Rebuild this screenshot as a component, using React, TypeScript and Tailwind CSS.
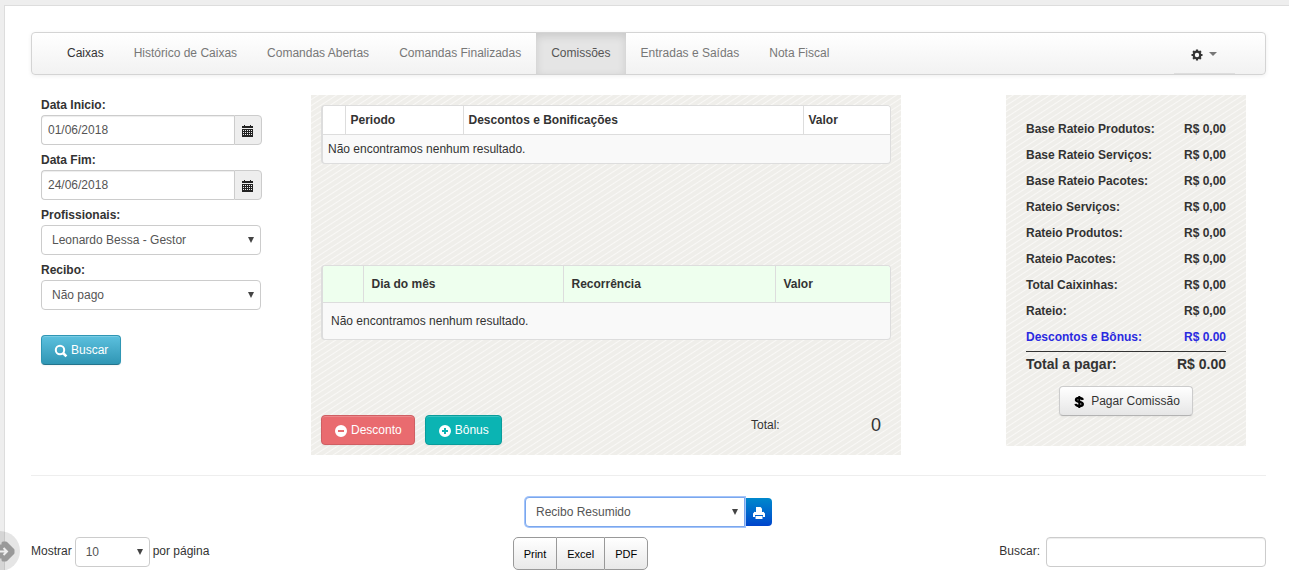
import type { ReactNode } from "react";

const iconClass = "h-3.5 w-3.5 shrink-0 translate-y-px";

function CalendarIcon() {
  return (
    <svg viewBox="0 0 12 14" className="h-3.5 w-3 translate-y-0.5 text-[#222]" fill="currentColor" shapeRendering="crispEdges" aria-hidden="true">
      <path d="M2 0h1v1h5V0h1v1h2v2H0V1h2z" />
      <path
        fillRule="evenodd"
        d="M0 4h11v8H0zM1 5v1h1V5zM3 5v1h1V5zM5 5v1h1V5zM7 5v1h1V5zM9 5v1h1V5zM1 7v1h1V7zM3 7v1h1V7zM5 7v1h1V7zM7 7v1h1V7zM9 7v1h1V7zM1 9v1h1V9zM3 9v1h1V9zM5 9v1h1V9zM7 9v1h1V9zM9 9v1h1V9z"
      />
    </svg>
  );
}

function SearchIcon() {
  return (
    <svg viewBox="0 0 14 14" className={iconClass} fill="none" stroke="currentColor" aria-hidden="true">
      <circle cx="6" cy="6" r="4.2" strokeWidth="2" />
      <path d="M9 9l3.4 3.4" strokeWidth="2.6" />
    </svg>
  );
}

function CircleIcon({ plus = false }: { plus?: boolean }) {
  return (
    <svg viewBox="0 0 14 14" className={iconClass} fill="currentColor" aria-hidden="true">
      <path
        fillRule="evenodd"
        d={
          plus
            ? "M7 1a6 6 0 1 0 0 12A6 6 0 0 0 7 1zM6 4h2v2h2v2H8v2H6V8H4V6h2z"
            : "M7 1a6 6 0 1 0 0 12A6 6 0 0 0 7 1zM4 6h6v2H4z"
        }
      />
    </svg>
  );
}

function DollarIcon() {
  return (
    <svg viewBox="0 0 14 14" className={`${iconClass} text-black`} fill="none" stroke="currentColor" aria-hidden="true">
      <path d="M10.8 4.9C10.4 3.6 9.200 3 7.300 3S4 3.700 4 4.900C4 7.400 10.800 6.200 10.800 9c0 1.300-1.300 2-3.500 2s-3.500-.7-3.700-2.100" strokeWidth="2.400" />
      <path d="M7.300 1v12" strokeWidth="2" />
    </svg>
  );
}

function PrinterIcon() {
  return (
    <svg viewBox="0 0 14 14" className={iconClass} fill="currentColor" aria-hidden="true">
      <path d="M4 1h4.500L10 2.500V6H4z" />
      <path d="M1 7.500L3 5.500V7h8V5.500l2 2V11h-2V9H3v2H1z" />
      <path d="M3.500 10h7v3h-7z" />
      <path d="M2 6h10v3H2z" />
    </svg>
  );
}

function CogIcon() {
  const teeth = [0, 45, 90, 135];
  return (
    <svg viewBox="0 0 14 14" className="h-3.5 w-3.5 text-[#333]" fill="none" stroke="currentColor" aria-hidden="true">
      <circle cx="7" cy="7" r="3.300" strokeWidth="2.200" />
      {teeth.map((a) => (
        <path key={a} d="M7 1.500v2M7 10.500v2" strokeWidth="2.200" transform={`rotate(${a} 7 7)`} />
      ))}
    </svg>
  );
}

function Select({ id, label, options, className = "", focused = false }: { id: string; label?: string; options: string[]; className?: string; focused?: boolean }) {
  return (
    <div className={`relative ${className}`}>
      <select
        id={id}
        aria-label={label}
        className={`h-[30px] w-full appearance-none border bg-white pr-5 pl-2.5 text-[#555] outline-none ${
          focused ? "rounded-l border-[#7ba7ec] ring-1 ring-[#a3c4fb]" : "rounded border-[#ccc]"
        }`}
      >
        {options.map((o) => (
          <option key={o}>{o}</option>
        ))}
      </select>
      <svg viewBox="0 0 6 6" className="pointer-events-none absolute top-3 right-[7px] h-1.5 w-1.5" fill="#444" aria-hidden="true">
        <path d="M0 0h6L3 6z" />
      </svg>
    </div>
  );
}

function DateField({ id, label, value }: { id: string; label: string; value: string }) {
  return (
    <div className="mb-[5px]">
      <label htmlFor={id} className="block font-bold">{label}</label>
      <div className="flex h-[30px]">
        <input
          id={id}
          defaultValue={value}
          className="w-[193px] rounded-l border border-r-0 border-[#ccc] bg-white px-1.5 text-[#555] shadow-[inset_0_1px_1px_rgba(0,0,0,0.075)] outline-none"
        />
        <button type="button" aria-label={`Abrir calendário: ${label}`} className="flex w-7 items-center justify-center rounded-r border border-[#ccc] bg-[#eee]">
          <CalendarIcon />
        </button>
      </div>
    </div>
  );
}

function SelectField({ id, label, options }: { id: string; label: string; options: string[] }) {
  return (
    <div className="mb-[5px]">
      <label htmlFor={id} className="block font-bold">{label}</label>
      <Select id={id} options={options} className="w-[220px]" />
    </div>
  );
}

function Button({ className, children }: { className: string; children: ReactNode }) {
  return (
    <button
      type="button"
      className={`inline-flex h-[30px] items-center gap-[3px] rounded border px-3 whitespace-nowrap shadow-[inset_0_1px_0_rgba(255,255,255,0.2),0_1px_2px_rgba(0,0,0,0.05)] ${className}`}
    >
      {children}
    </button>
  );
}

const stripes =
  "bg-[#efeeea] bg-[repeating-linear-gradient(147deg,transparent_0px,transparent_3px,#f9f8f6_4px,transparent_5px)]";

const tabs = ["Caixas", "Histórico de Caixas", "Comandas Abertas", "Comandas Finalizadas", "Comissões", "Entradas e Saídas", "Nota Fiscal"];

const summary = [
  ["Base Rateio Produtos:", "R$ 0,00"],
  ["Base Rateio Serviços:", "R$ 0,00"],
  ["Base Rateio Pacotes:", "R$ 0,00"],
  ["Rateio Serviços:", "R$ 0,00"],
  ["Rateio Produtos:", "R$ 0,00"],
  ["Rateio Pacotes:", "R$ 0,00"],
  ["Total Caixinhas:", "R$ 0,00"],
  ["Rateio:", "R$ 0,00"],
  ["Descontos e Bônus:", "R$ 0.00"],
];

function Navbar() {
  return (
    <nav className="flex h-[43px] justify-between rounded border border-[#d4d4d4] bg-linear-to-b from-white to-[#f2f2f2] px-5 shadow-[0_1px_4px_rgba(0,0,0,0.067)]">
      <div className="flex">
        {tabs.map((t) => (
          <a
            key={t}
            href="#"
            className={`flex items-center px-[15px] pb-0.5 whitespace-nowrap ${
              t === "Comissões"
                ? "bg-[#e5e5e5] text-[#555] shadow-[inset_0_3px_8px_rgba(0,0,0,0.125)]"
                : t === "Caixas"
                  ? "text-[#333]"
                  : "text-[#777]"
            }`}
          >
            {t}
          </a>
        ))}
      </div>
      <button type="button" aria-label="Configurações" className="mr-2.5 flex w-[61px] items-center gap-[5px] border-b border-[#ddd] pt-1 pl-4">
        <CogIcon />
        <svg viewBox="0 0 8 4" className="mb-0.5 h-1 w-2" fill="#777" aria-hidden="true">
          <path d="M0 0h8L4 4z" />
        </svg>
      </button>
    </nav>
  );
}

function Filters() {
  return (
    <form className="w-[280px] shrink-0 pl-2.5">
      <DateField id="inicio" label="Data Inicio:" value="01/06/2018" />
      <DateField id="fim" label="Data Fim:" value="24/06/2018" />
      <SelectField id="profissionais" label="Profissionais:" options={["Leonardo Bessa - Gestor"]} />
      <SelectField id="recibo" label="Recibo:" options={["Não pago", "Pago"]} />
      <div className="pt-5">
        <Button className="border-[#2f96b4] border-b-[#24748c] bg-linear-to-b from-[#5bc0de] to-[#2f96b4] text-white">
          <SearchIcon />
          Buscar
        </Button>
      </div>
    </form>
  );
}

function Tables() {
  const frame = "overflow-hidden rounded border border-l-2 border-[#ddd] bg-[#f9f9f9]";
  return (
    <section className={`h-[360px] max-w-[590px] flex-1 p-2.5 ${stripes}`}>
      <div className="h-40">
        <div className={frame}>
          <table className="w-full table-fixed text-left">
            <thead className="bg-white">
              <tr className="h-[28px]">
                <th className="w-[22px]" />
                <th className="w-[118px] border-l border-[#ddd] px-[5px]">Periodo</th>
                <th className="border-l border-[#ddd] px-[5px]">Descontos e Bonificações</th>
                <th className="w-[87px] border-l border-[#ddd] px-[5px]">Valor</th>
              </tr>
            </thead>
            <tbody>
              <tr className="h-[29px]">
                <td colSpan={4} className="border-t border-[#ddd] px-[5px]">Não encontramos nenhum resultado.</td>
              </tr>
            </tbody>
          </table>
        </div>
      </div>
      <div className="h-[150px]">
        <div className={frame}>
          <table className="w-full table-fixed text-left">
            <thead className="bg-[#eeffee]">
              <tr className="h-9">
                <th className="w-10" />
                <th className="w-[200px] border-l border-[#ddd] px-2">Dia do mês</th>
                <th className="border-l border-[#ddd] px-2">Recorrência</th>
                <th className="w-[115px] border-l border-[#ddd] px-2">Valor</th>
              </tr>
            </thead>
            <tbody>
              <tr className="h-[37px]">
                <td colSpan={4} className="border-t border-[#ddd] px-2">Não encontramos nenhum resultado.</td>
              </tr>
            </tbody>
          </table>
        </div>
      </div>
      <div className="flex gap-2.5">
        <Button className="border-[#cf5f63] bg-[#e96b6f] text-white">
          <CircleIcon />
          Desconto
        </Button>
        <Button className="border-[#0a9c9b] bg-[#0bb4b3] text-white">
          <CircleIcon plus />
          Bônus
        </Button>
        <div className="ml-auto flex h-5 w-[140px] items-center justify-between pr-2.5">
          <span>Total:</span>
          <span className="text-lg leading-5">0</span>
        </div>
      </div>
    </section>
  );
}

function Summary() {
  return (
    <section className={`mr-5 ml-auto w-60 shrink-0 self-start px-5 pt-[21px] pb-[30px] font-bold ${stripes}`}>
      <dl>
        {summary.map(([name, value], i) => (
          <div key={name} className={`flex h-[26px] items-center justify-between ${i === 8 ? "text-[#2a2ae0]" : ""}`}>
            <dt>{name}</dt>
            <dd>{value}</dd>
          </div>
        ))}
        <div className="mt-px flex h-[25px] items-center justify-between border-t border-[#333] text-sm">
          <dt>Total a pagar:</dt>
          <dd>{"R$ 0.00"}</dd>
        </div>
      </dl>
      <div className="mt-2.5 flex justify-center font-normal">
        <Button className="border-[#ccc] border-b-[#b3b3b3] bg-linear-to-b from-white to-[#e6e6e6] text-[#333]">
          <DollarIcon />
          <span className="pl-0.5">Pagar Comissão</span>
        </Button>
      </div>
    </section>
  );
}

function Footer() {
  const exportClass = "border-[#999] bg-linear-to-b from-white to-[#e9e9e9] px-2.5 text-[11px] text-black";
  return (
    <footer>
      <div className="mt-[21px] flex items-center justify-center">
        <Select id="modelo" label="Modelo de recibo" options={["Recibo Resumido", "Recibo Completo"]} className="w-[220px]" focused />
        <button
          type="button"
          aria-label="Imprimir recibo"
          className="flex h-7 w-[27px] items-center justify-center rounded-r bg-linear-to-b from-[#0088cc] to-[#0044cc] text-white"
        >
          <PrinterIcon />
        </button>
      </div>
      <div className="mt-2.5 grid grid-cols-[39%_1fr_auto] items-start">
        <div className="flex items-center gap-[3px]">
          <label htmlFor="linhas" className="pb-0.5">Mostrar</label>
          <Select id="linhas" options={["10", "25", "50"]} className="w-[75px]" />
          <span className="pb-0.5">por página</span>
        </div>
        <div className="flex h-[33px]">
          <button type="button" className={`rounded-l-[5px] border ${exportClass}`}>Print</button>
          <button type="button" className={`border-y ${exportClass}`}>Excel</button>
          <button type="button" className={`rounded-r-[5px] border ${exportClass}`}>PDF</button>
        </div>
        <div className="flex items-center gap-1.5">
          <label htmlFor="busca" className="pb-0.5">Buscar:</label>
          <input id="busca" className="h-[30px] w-[220px] rounded border border-[#ccc] bg-white px-1.5 shadow-[inset_0_1px_1px_rgba(0,0,0,0.075)] outline-none" />
        </div>
      </div>
    </footer>
  );
}

export default function App() {
  return (
    <div className="flex min-h-screen flex-col bg-[#eee] pt-[5px] pl-1 font-['Liberation_Sans',Arial,sans-serif] text-xs leading-5 text-[#333]">
      <main className="flex-1 border-t border-l border-[#ddd] bg-white pt-[26px] pr-[23px] pl-[26px]">
        <Navbar />
        <div className="mt-5 flex">
          <Filters />
          <Tables />
          <Summary />
        </div>
        <hr className="mt-5 border-[#eee]" />
        <Footer />
      </main>
      <button type="button" aria-label="Abrir menu" className="fixed -bottom-px -left-5 h-10 w-10 rounded-full bg-black/10">
        <svg viewBox="0 0 40 40" className="h-10 w-10" aria-hidden="true">
          <path d="M14 15h9v-3h3l7 7v3l-7 7h-3v-3h-9z" fill="#999" stroke="#999" strokeWidth="3" strokeLinejoin="round" />
          <path d="M14 20.500h12M23.500 17l3.500 3.500-3.500 3.500" fill="none" stroke="#eee" strokeWidth="2" />
        </svg>
      </button>
    </div>
  );
}
